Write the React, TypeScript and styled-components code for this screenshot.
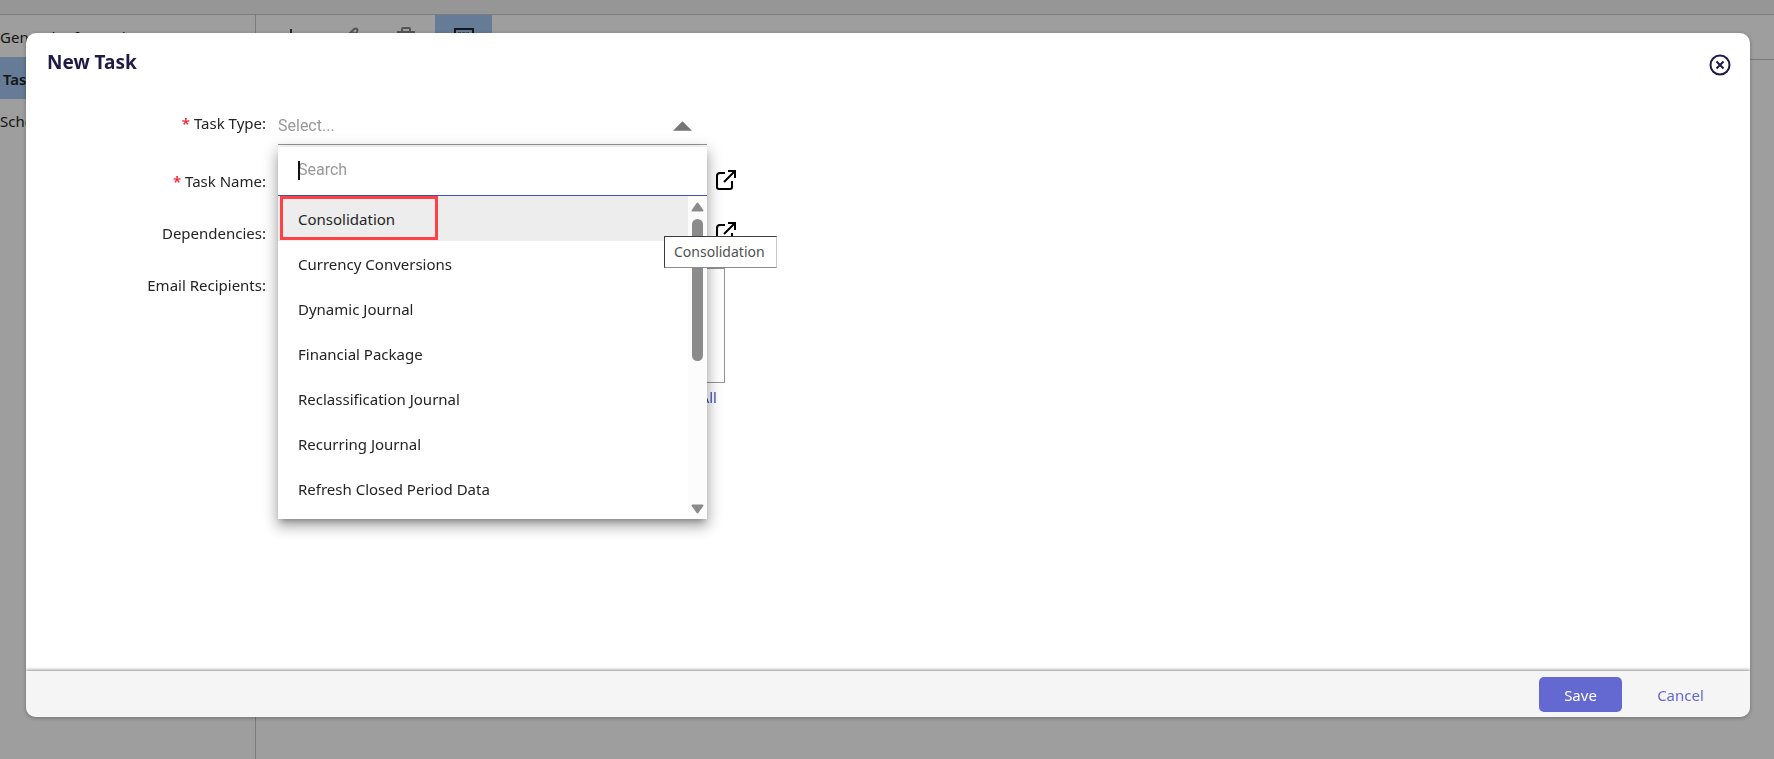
import React from "react";
import styled, { createGlobalStyle, css } from "styled-components";

const Global = createGlobalStyle`
  * { box-sizing: border-box; }
  body { margin: 0; background: #fff; font: 15px/24px "Noto Sans", "Segoe UI", sans-serif; color: #242424; }
  button, input, select, textarea { font: inherit; color: inherit; margin: 0; }
  #root { min-height: 100vh; display: flex; }
`;

const Page = styled.div`
  flex: 1;
  min-height: 100vh;
  display: flex;
  flex-direction: column;
  overflow: hidden;
`;
const TopBar = styled.header`
  height: 15px;
  background: #f2f2f2;
  border-bottom: 1px solid #c8c8c8;
`;
const Main = styled.div`
  flex: 1;
  display: flex;
`;
const Sidebar = styled.nav`
  width: 256px;
  border-right: 1px solid #c8c8c8;
`;
const SideLink = styled.a<{ $active?: boolean }>`
  display: block;
  height: 42px;
  line-height: 44px;
  text-decoration: none;
  color: #242424;
  ${(p) => p.$active && css`
    background: #a3c7f2;
    font-weight: 600;
    padding-left: 3px;
  `}
`;
const Work = styled.div`
  flex: 1;
`;
const Toolbar = styled.div`
  display: flex;
  height: 45px;
  padding-left: 8px;
  border-bottom: 1px solid #c8c8c8;
`;
const Tool = styled.button<{ $on?: boolean }>`
  width: 57px;
  height: 44px;
  padding: 0;
  border: 0;
  display: grid;
  place-items: center;
  background: ${(p) => (p.$on ? "#a3c7f2" : "transparent")};
  color: ${(p) => (p.$on ? "#242424" : "#8a8a8a")};
`;

const Overlay = styled.div`
  position: fixed;
  inset: 0;
  display: flex;
  padding: 33px 24px 42px 26px;
  background: rgba(0, 0, 0, 0.38);
`;
const Dialog = styled.section`
  flex: 1;
  display: flex;
  flex-direction: column;
  overflow: hidden;
  background: #fff;
  border-radius: 10px;
  box-shadow: 0 1px 4px rgba(0, 0, 0, 0.3);
`;
const DialogHead = styled.div`
  display: flex;
  justify-content: space-between;
  align-items: flex-start;
  height: 59px;
  padding: 15px 18px 0 21px;
`;
const Title = styled.h1`
  margin: 0;
  font-size: 19px;
  line-height: 28px;
  font-weight: 700;
  color: #1f1b45;
`;
const IconButton = styled.button`
  display: grid;
  place-items: center;
  flex: none;
  width: 24px;
  height: 24px;
  padding: 0;
  border: 0;
  background: none;
  color: #000;
`;
const CloseButton = styled(IconButton)`
  margin-top: 5px;
  color: #1f1b45;
`;
const Form = styled.form`
  flex: 1;
`;
const Row = styled.div<{ $h: number }>`
  display: grid;
  grid-template-columns: 240px 1fr;
  column-gap: 12px;
  align-items: start;
  min-height: ${(p) => p.$h}px;
`;
const Label = styled.label<{ $top: number }>`
  padding-top: ${(p) => p.$top}px;
  text-align: right;
`;
const Star = styled.span`
  color: #f5222d;
  font-weight: 600;
`;
const Field = styled.div`
  display: flex;
  align-items: center;
  gap: 7px;
  height: 48px;
`;
const TextInput = styled.input`
  width: 429px;
  height: 36px;
  padding: 0;
  border: 0;
  border-bottom: 1px solid #949494;
  background: none;
  outline: 0;
`;
const SelectWrap = styled.div`
  position: relative;
  width: 429px;
`;
const SelectBox = styled.select`
  display: block;
  appearance: none;
  width: 100%;
  height: 53px;
  padding: 16px 0 0;
  border: 0;
  border-bottom: 1px solid #949494;
  background: none;
  outline: 0;
  font: 16px/24px Roboto, sans-serif;
  color: #999;
`;
const Arrow = styled.svg`
  position: absolute;
  right: 15px;
  top: 29px;
  pointer-events: none;
`;
const Menu = styled.div`
  position: absolute;
  z-index: 2;
  top: 55px;
  left: 0;
  width: 100%;
  background: #fff;
  box-shadow: 0 5px 6px -3px rgba(0, 0, 0, 0.3), 0 8px 12px 1px rgba(0, 0, 0, 0.18), 0 3px 14px 3px rgba(0, 0, 0, 0.14);
`;
const SearchWrap = styled.div`
  position: relative;
  height: 49px;
  border-bottom: 1px solid #3f51b5;
`;
const SearchInput = styled.input`
  display: block;
  width: 100%;
  height: 44px;
  padding: 0 20px;
  border: 0;
  background: none;
  outline: 0;
  font: 16px/24px Roboto, sans-serif;
  &::placeholder { color: #999; opacity: 1; }
`;
const Caret = styled.span`
  position: absolute;
  left: 20px;
  top: 14px;
  width: 2px;
  height: 19px;
  background: #111;
`;
const ListArea = styled.div`
  display: flex;
`;
const List = styled.ul`
  flex: 1;
  margin: 0;
  padding: 0 0 8px;
  list-style: none;
`;
const Option = styled.li<{ $active?: boolean }>`
  position: relative;
  height: 45px;
  padding: 0 20px;
  line-height: 46px;
  background: ${(p) => (p.$active ? "#ededed" : "transparent")};
`;
const Marker = styled.span`
  position: absolute;
  left: 2px;
  top: 0;
  width: 158px;
  height: 44px;
  border: 3px solid #fd4145;
`;
const ScrollBar = styled.div`
  display: flex;
  flex-direction: column;
  align-items: center;
  width: 19px;
  padding: 6px 0 5px;
  background: #fcfcfc;
`;
const Thumb = styled.div`
  width: 11px;
  height: 142px;
  margin: 7px 0 auto;
  border-radius: 6px;
  background: #8b8b8b;
`;
const Tooltip = styled.div`
  position: absolute;
  left: 386px;
  top: 89px;
  width: 113px;
  height: 32px;
  padding-left: 9px;
  border: 1px solid;
  border-color: #3c3c3c #c8c8c8 #8c8c8c #3c3c3c;
  background: #fff;
  font-size: 14px;
  line-height: 30px;
  color: #505050;
`;
const Recipients = styled.div`
  width: 447px;
  padding-top: 8px;
`;
const TextArea = styled.textarea`
  display: block;
  width: 100%;
  height: 115px;
  border: 1px solid #949494;
  resize: none;
  outline: 0;
`;
const ClearLink = styled.a`
  display: block;
  padding: 2px 8px 0 0;
  text-align: right;
  text-decoration: none;
  color: #3f51b5;
`;
const Footer = styled.footer`
  display: flex;
  justify-content: flex-end;
  align-items: center;
  gap: 17px;
  height: 46px;
  padding-right: 28px;
  background: #f5f5f5;
  box-shadow: 0 -1px 3px rgba(0, 0, 0, 0.45);
`;
const Action = styled.button<{ $primary?: boolean }>`
  width: 83px;
  height: 35px;
  padding: 1px 0 0;
  border: 0;
  border-radius: 5px;
  background: ${(p) => (p.$primary ? "#6469d2" : "transparent")};
  color: ${(p) => (p.$primary ? "#fff" : "#6469d2")};
`;

const OpenIcon = () => (
  <svg width="22" height="22" viewBox="0 0 22 22" fill="none" stroke="currentColor" strokeWidth="2">
    <path d="M10 4H5a3 3 0 0 0-3 3v11a2 2 0 0 0 2 2h11a2 2 0 0 0 2-2v-6M9 13 20 2M13 2h7v7" />
  </svg>
);

const options = [
  "Consolidation",
  "Currency Conversions",
  "Dynamic Journal",
  "Financial Package",
  "Reclassification Journal",
  "Recurring Journal",
  "Refresh Closed Period Data",
];

export default function App() {
  return (
    <>
      <Global />
      <Page>
        <TopBar />
        <Main>
          <Sidebar>
            <SideLink href="#general">General Information</SideLink>
            <SideLink href="#tasks" $active>Tasks</SideLink>
            <SideLink href="#schedule">Schedule</SideLink>
          </Sidebar>
          <Work>
            <Toolbar>
              <Tool aria-label="Add">
                <svg width="24" height="16" viewBox="0 0 24 16" stroke="#444" strokeWidth="2"><path d="M10 0v16M2 8h16" /></svg>
              </Tool>
              <Tool aria-label="Edit">
                <svg width="20" height="22" viewBox="0 0 20 22" fill="none" stroke="currentColor" strokeWidth="2"><path d="m3 17 1-4L14 3q2-1 3 0t0 3L7 16zM7 14l7-8" /></svg>
              </Tool>
              <Tool aria-label="Delete">
                <svg width="20" height="22" viewBox="0 0 20 22" fill="none" stroke="currentColor" strokeWidth="2"><path d="M0 6h18M5 6V3q0-1 1-1h6q1 0 1 1v3M2 6v14h14V6" /></svg>
              </Tool>
              <Tool aria-label="Grid" $on>
                <svg width="20" height="18" viewBox="0 0 20 18" fill="none" stroke="currentColor" strokeWidth="2"><path d="M1 1h18v16H1z" /><path d="M4 5h3M8 5h3M12 5h3" strokeWidth="1" /></svg>
              </Tool>
            </Toolbar>
          </Work>
        </Main>
      </Page>
      <Overlay>
        <Dialog role="dialog" aria-labelledby="title">
          <DialogHead>
            <Title id="title">New Task</Title>
            <CloseButton aria-label="Close">
              <svg width="22" height="22" viewBox="0 0 22 22" fill="none" stroke="currentColor" strokeWidth="2">
                <circle cx="11" cy="11" r="9.5" />
                <path d="m7.5 7.5 7 7m0-7-7 7" />
              </svg>
            </CloseButton>
          </DialogHead>
          <Form id="task-form">
            <Row $h={64}>
              <Label $top={19} htmlFor="type"><Star>*</Star> Task Type:</Label>
              <SelectWrap>
                <SelectBox id="type"><option>Select...</option></SelectBox>
                <Arrow width="19" height="10" viewBox="0 0 20 10"><path d="M0 10 10 0l10 10z" fill="#757575" /></Arrow>
                <Menu>
                  <SearchWrap>
                    <SearchInput placeholder="Search" aria-label="Search" />
                    <Caret />
                  </SearchWrap>
                  <ListArea>
                    <List role="listbox">
                      {options.map((o, i) => (
                        <Option key={o} role="option" aria-selected={i === 0} $active={i === 0}>
                          {o}
                          {i === 0 && <Marker />}
                        </Option>
                      ))}
                    </List>
                    <ScrollBar>
                      <svg width="13" height="10" viewBox="0 0 13 10"><path d="M6.5 1.5 11.5 8.5H1.5z" fill="#8b8b8b" stroke="#8b8b8b" strokeWidth="2" strokeLinejoin="round" /></svg>
                      <Thumb />
                      <svg width="13" height="10" viewBox="0 0 13 10"><path d="M6.5 8.5 11.5 1.5H1.5z" fill="#8b8b8b" stroke="#8b8b8b" strokeWidth="2" strokeLinejoin="round" /></svg>
                    </ScrollBar>
                  </ListArea>
                  <Tooltip role="tooltip">Consolidation</Tooltip>
                </Menu>
              </SelectWrap>
            </Row>
            <Row $h={52}>
              <Label $top={13} htmlFor="name"><Star>*</Star> Task Name:</Label>
              <Field>
                <TextInput id="name" />
                <IconButton type="button" aria-label="Open task name"><OpenIcon /></IconButton>
              </Field>
            </Row>
            <Row $h={52}>
              <Label $top={13} htmlFor="deps">Dependencies:</Label>
              <Field>
                <TextInput id="deps" />
                <IconButton type="button" aria-label="Open dependencies"><OpenIcon /></IconButton>
              </Field>
            </Row>
            <Row $h={52}>
              <Label $top={13} htmlFor="mail">Email Recipients:</Label>
              <Recipients>
                <TextArea id="mail" />
                <ClearLink href="#clear">Clear All</ClearLink>
              </Recipients>
            </Row>
          </Form>
          <Footer>
            <Action $primary type="submit" form="task-form">Save</Action>
            <Action type="button">Cancel</Action>
          </Footer>
        </Dialog>
      </Overlay>
    </>
  );
}
